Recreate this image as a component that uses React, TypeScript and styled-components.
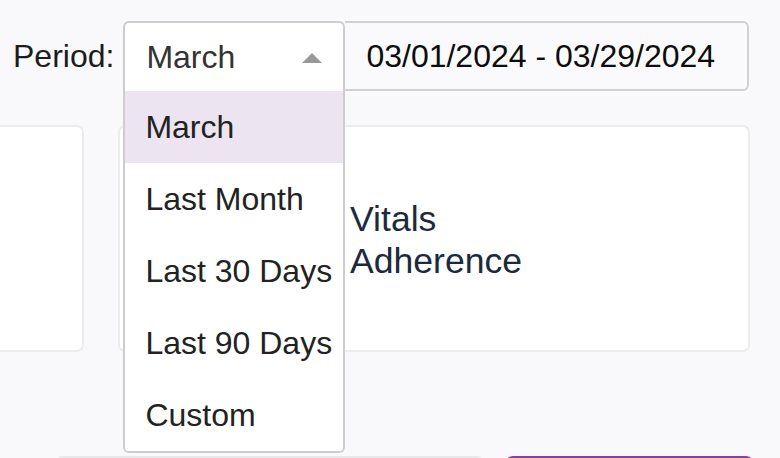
import styled, { createGlobalStyle } from "styled-components";

const GlobalStyle = createGlobalStyle`
  html, body {
    margin: 0;
    padding: 0;
    background: #f9f9fb;
    font-family: "Liberation Sans", Arial, Helvetica, sans-serif;
    overflow: hidden;
  }
`;

const Page = styled.div`
  width: 780px;
  height: 458px;
  overflow: hidden;
  display: flex;
  flex-direction: column;
  & > * {
    flex-shrink: 0;
  }
`;

const Toolbar = styled.div`
  display: flex;
  align-items: center;
  padding: 21px 0 0 13px;
  height: 70px;
  position: relative;
  z-index: 2;
`;

const Label = styled.span`
  font-size: 32px;
  color: #1c1c1c;
  margin-right: 9px;
`;

const SelectWrap = styled.div`
  position: relative;
  width: 222px;
  height: 70px;
`;

const SelectBox = styled.div`
  box-sizing: border-box;
  height: 70px;
  display: flex;
  align-items: center;
  justify-content: space-between;
  padding: 0 21px 0 21px;
  background: #fff;
  border: 2px solid #cdcdcd;
  border-bottom: none;
  border-radius: 6px 6px 0 0;
  font-size: 32px;
  color: #333;
`;

const Caret = styled.span`
  width: 0;
  height: 0;
  border-left: 10px solid transparent;
  border-right: 10px solid transparent;
  border-bottom: 10px solid #999;
  margin-top: 2px;
`;

const Menu = styled.ul`
  position: absolute;
  top: 100%;
  left: 0;
  width: 100%;
  box-sizing: border-box;
  margin: 0;
  padding: 0;
  list-style: none;
  background: #fff;
  border: 2px solid #cdcdcd;
  border-top: none;
  border-radius: 0 0 6px 6px;
  overflow: hidden;
`;

const MenuItem = styled.li<{ $active?: boolean }>`
  height: 72px;
  display: flex;
  align-items: center;
  padding-left: 20px;
  font-size: 32px;
  color: #222;
  background: ${(p) => (p.$active ? "#ece4f1" : "#fff")};
`;

const DateInput = styled.div`
  box-sizing: border-box;
  width: 404px;
  height: 70px;
  display: flex;
  align-items: center;
  padding-left: 21px;
  border: 2px solid #d2d2d2;
  border-left: none;
  border-radius: 0 6px 6px 0;
  background: #fafafc;
  font-size: 32px;
  color: #0d0d0d;
`;

const CardRow = styled.div`
  display: flex;
  gap: 34px;
  margin-top: 34px;
  height: 227px;
`;

const Card = styled.div<{ $width: number; $shift?: number }>`
  box-sizing: border-box;
  flex-shrink: 0;
  width: ${(p) => p.$width}px;
  margin-left: ${(p) => p.$shift ?? 0}px;
  background: #fff;
  border: 2px solid #ececee;
  border-radius: 7px;
  display: flex;
  align-items: center;
`;

const CardTitle = styled.div`
  padding-left: 230px;
  font-size: 35.6px;
  line-height: 42px;
  color: #1b2a3e;
  margin-top: 2px;
`;

const BottomRow = styled.div`
  display: flex;
  gap: 21px;
  margin-top: 104px;
  padding-left: 55px;
`;

const GhostButton = styled.div`
  width: 425px;
  height: 40px;
  background: #fff;
  border: 2px solid #e8e8ea;
  border-radius: 8px;
`;

const PrimaryButton = styled.div`
  width: 249px;
  height: 40px;
  background: #8a3da6;
  border-radius: 8px;
`;

const options = ["March", "Last Month", "Last 30 Days", "Last 90 Days", "Custom"];

export default function App() {
  return (
    <Page>
      <GlobalStyle />
      <Toolbar>
        <Label>Period:</Label>
        <SelectWrap>
          <SelectBox>
            <span>March</span>
            <Caret />
          </SelectBox>
          <Menu>
            {options.map((o, i) => (
              <MenuItem key={o} $active={i === 0}>
                {o}
              </MenuItem>
            ))}
          </Menu>
        </SelectWrap>
        <DateInput>03/01/2024 - 03/29/2024</DateInput>
      </Toolbar>
      <CardRow>
        <Card $width={120} $shift={-36} />
        <Card $width={632}>
          <CardTitle>
            Vitals
            <br />
            Adherence
          </CardTitle>
        </Card>
      </CardRow>
      <BottomRow>
        <GhostButton />
        <PrimaryButton />
      </BottomRow>
    </Page>
  );
}
